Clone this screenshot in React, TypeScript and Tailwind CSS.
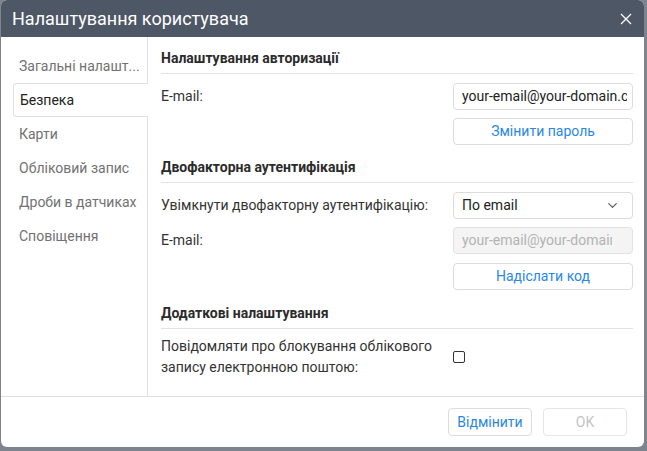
import { ChevronDown } from "lucide-react";

const menu = ["Загальні налашт...", "Безпека", "Карти", "Обліковий запис", "Дроби в датчиках", "Сповіщення"];

function SectionTitle({ children, className = "" }: { children: string; className?: string }) {
  return (
    <div className={`border-b border-[#e3e3e3] pb-[5px] text-[14px] font-bold leading-[20px] text-[#2b2b2b] ${className}`}>
      {children}
    </div>
  );
}

export default function App() {
  return (
    <div className="h-[451px] w-[647px] bg-[#7d848d] font-['Roboto',sans-serif]">
      <div className="ml-[1px] flex h-[447px] w-[643px] flex-col overflow-hidden rounded-md bg-white">
        {/* header */}
        <div className="flex h-[37px] shrink-0 items-center justify-between bg-[#4e5766] pl-[11px] pr-[10px]">
          <span className="text-[18px] text-white">Налаштування користувача</span>
          <svg width="14" height="14" viewBox="0 0 14 14" className="mr-[1px]">
            <path d="M2 2 L12 12 M12 2 L2 12" stroke="#fff" strokeWidth="1.3" />
          </svg>
        </div>

        {/* body */}
        <div className="flex flex-1 border-b border-[#e0e0e0]">
          <div className="w-[147px] shrink-0 border-r border-[#e0e0e0] pt-[12px]">
            {menu.map((item, i) =>
              i === 1 ? (
                <div
                  key={i}
                  className="relative -mr-px ml-[12px] flex h-[34px] items-center rounded-l-[4px] border border-r-0 border-[#e0e0e0] bg-white pl-[6px] text-[14px] text-[#222]"
                >
                  {item}
                </div>
              ) : (
                <div key={i} className="flex h-[34px] items-center pl-[18px] text-[14px] text-[#727272]">
                  {item}
                </div>
              )
            )}
          </div>

          <div className="flex-1 pl-[13px] pr-[11px] pt-[11px] text-[14px] text-[#333]">
            <SectionTitle>Налаштування авторизації</SectionTitle>
            <div className="mt-[9px] flex items-center justify-between">
              <span>E-mail:</span>
              <div className="flex h-[27px] w-[180px] items-center rounded-[4px] border border-[#dcdcdc] pl-[8px]">
                <div className="w-[165px] overflow-hidden whitespace-nowrap text-[#222]">your-email@your-domain.com</div>
              </div>
            </div>
            <div className="mt-[8px] flex justify-end">
              <button className="h-[27px] w-[180px] rounded-[4px] border border-[#dcdcdc] bg-white text-[14px] text-[#2a87e8]">
                Змінити пароль
              </button>
            </div>

            <SectionTitle className="mt-[12px]">Двофакторна аутентифікація</SectionTitle>
            <div className="mt-[9px] flex items-center justify-between">
              <span>Увімкнути двофакторну аутентифікацію:</span>
              <div className="flex h-[27px] w-[180px] items-center justify-between rounded-[4px] border border-[#dcdcdc] pl-[8px] pr-[12px] text-[#222]">
                <span>По email</span>
                <ChevronDown size={15} strokeWidth={1.8} className="text-[#555]" />
              </div>
            </div>
            <div className="mt-[8px] flex items-center justify-between">
              <span>E-mail:</span>
              <div className="flex h-[27px] w-[180px] items-center rounded-[4px] border border-[#e2e2e2] bg-[#f4f4f4] pl-[8px]">
                <div className="w-[150px] overflow-hidden whitespace-nowrap text-[#b3b3b3]">your-email@your-domain.com</div>
              </div>
            </div>
            <div className="mt-[9px] flex justify-end">
              <button className="h-[27px] w-[180px] rounded-[4px] border border-[#dcdcdc] bg-white text-[14px] text-[#2a87e8]">
                Надіслати код
              </button>
            </div>

            <SectionTitle className="mt-[13px]">Додаткові налаштування</SectionTitle>
            <div className="mt-[7px] flex items-center">
              <span className="w-[292px] leading-[21px]">
                Повідомляти про блокування облікового запису електронною поштою:
              </span>
              <span className="h-[12px] w-[12px] rounded-[2px] border border-[#333]" />
            </div>
          </div>
        </div>

        {/* footer */}
        <div className="flex h-[50px] shrink-0 items-center justify-end gap-[11px] pr-[17px]">
          <button className="h-[28px] w-[84px] rounded-[4px] border border-[#dcdcdc] bg-white text-[14px] text-[#2a87e8]">
            Відмінити
          </button>
          <button className="h-[28px] w-[84px] rounded-[4px] border border-[#e6e6e6] bg-white text-[14px] text-[#c4c4c4]">
            OK
          </button>
        </div>
      </div>
    </div>
  );
}
